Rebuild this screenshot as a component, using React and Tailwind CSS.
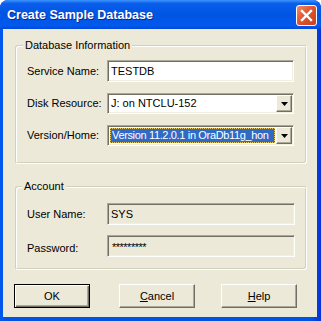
export default function App() {
  const sunken =
    "border border-t-[#ACA899] border-l-[#ACA899] border-b-white border-r-white shadow-[inset_1px_1px_0_#716F64,inset_-1px_-1px_0_#F1EFE2]";
  const etched =
    "border border-t-[#D0D0BF] border-l-[#D0D0BF] border-b-white border-r-white shadow-[inset_1px_1px_0_#fff,inset_-1px_-1px_0_#D0D0BF]";
  const raised =
    "border border-t-white border-l-white border-b-[#716F64] border-r-[#716F64] shadow-[inset_-1px_-1px_0_#ACA899]";

  const DropBtn = () => (
    <div className={`w-[16px] h-full shrink-0 flex items-center justify-center bg-[#ECE9D8] ${raised}`}>
      <svg width="7" height="4" viewBox="0 0 7 4">
        <path d="M0 0h7L3.5 4z" fill="#000" />
      </svg>
    </div>
  );

  return (
    <div className="w-[321px] h-[321px] flex flex-col rounded-t-[8px] overflow-hidden bg-[#0831D9] font-['Liberation_Sans',Arial,sans-serif] text-[11px] text-black">
      {/* title bar */}
      <div className="h-[29px] shrink-0 flex items-center justify-between pl-[7px] pr-[4px] bg-[linear-gradient(180deg,#3D95FF_0%,#0A5EEB_12%,#0054E3_50%,#0159ED_88%,#0048D8_100%)]">
        <span className="text-white font-bold text-[12.5px] [text-shadow:1px_1px_0_#0A2A8C] mt-[1px]">
          Create Sample Database
        </span>
        <div className="w-[21px] h-[21px] rounded-[3px] border border-white bg-[linear-gradient(135deg,#F08C6C_0%,#E0552E_45%,#C8401E_100%)] flex items-center justify-center mt-[2px]">
          <svg width="13" height="13" viewBox="0 0 13 13">
            <path d="M2 2L11 11M11 2L2 11" stroke="#fff" strokeWidth="2.4" strokeLinecap="square" />
          </svg>
        </div>
      </div>

      {/* frame + body */}
      <div className="flex-1 flex pl-[3px] pr-[4px] pb-[4px] bg-[linear-gradient(90deg,#0058EE_0%,#0054E3_2%,#0054E3_97%,#0831D9_100%)]">
        <div className="flex-1 bg-[#ECE9D8] flex flex-col pl-[12px] pr-[10px] pt-[16px]">
          {/* Database Information */}
          <div className={`relative h-[119px] w-[292px] rounded-[3px] ${etched} pt-[14px] pl-[11px] flex flex-col`}>
            <span className="absolute -top-[7px] left-[7px] px-[2px] bg-[#ECE9D8] leading-[13px]">
              Database Information
            </span>
            <div className="flex items-center h-[22px]">
              <span className="w-[80px]">Service Name:</span>
              <div className={`w-[187px] h-[22px] bg-white ${sunken} flex items-center pl-[3px]`}>TESTDB</div>
            </div>
            <div className="flex items-center h-[21px] mt-[11px]">
              <span className="w-[80px]">Disk Resource:</span>
              <div className={`w-[187px] h-[21px] bg-white ${sunken} flex items-stretch p-[1px]`}>
                <div className="flex-1 flex items-center pl-[2px]">J: on NTCLU-152</div>
                <DropBtn />
              </div>
            </div>
            <div className="flex items-center h-[21px] mt-[11px]">
              <span className="w-[80px]">Version/Home:</span>
              <div className={`w-[187px] h-[21px] bg-white ${sunken} flex items-stretch p-[1px]`}>
                <div className="flex-1 min-w-0 flex items-stretch p-[1px]">
                  <div className="flex-1 min-w-0 bg-[#316AC5] text-white border border-dotted border-[#E8C864] flex items-center pl-[1px] overflow-hidden whitespace-nowrap tracking-[-0.35px]">
                    Version 11.2.0.1 in OraDb11g_hon
                  </div>
                </div>
                <DropBtn />
              </div>
            </div>
          </div>

          {/* Account */}
          <div className={`relative h-[84px] w-[292px] mt-[22px] rounded-[3px] ${etched} pt-[16px] pl-[11px] flex flex-col`}>
            <span className="absolute -top-[7px] left-[6px] px-[2px] bg-[#ECE9D8] leading-[13px]">Account</span>
            <div className="flex items-center h-[22px]">
              <span className="w-[80px]">User Name:</span>
              <div className={`w-[188px] h-[22px] bg-[#ECE9D8] ${sunken} flex items-center pl-[3px]`}>SYS</div>
            </div>
            <div className="flex items-center h-[22px] mt-[10px]">
              <span className="w-[80px] pt-[5px]">Password:</span>
              <div className={`w-[188px] h-[22px] bg-[#ECE9D8] ${sunken} flex items-center pl-[4px] pt-[3px] tracking-[-0.5px]`}>*********</div>
            </div>
          </div>

          {/* buttons */}
          <div className="flex mt-[14px]">
            <button className="w-[76px] h-[24px] -ml-px border border-black bg-[#ECE9D8] shadow-[inset_1px_1px_0_#fff,inset_-1px_-1px_0_#716F64,inset_-2px_-2px_0_#ACA899] flex items-center justify-center">
              OK
            </button>
            <button className={`w-[76px] h-[24px] ml-[29px] bg-[#ECE9D8] ${raised} flex items-center justify-center`}>
              <span><span className="underline">C</span>ancel</span>
            </button>
            <button className={`w-[76px] h-[24px] ml-[26px] bg-[#ECE9D8] ${raised} flex items-center justify-center`}>
              <span><span className="underline">H</span>elp</span>
            </button>
          </div>
        </div>
      </div>
    </div>
  );
}
